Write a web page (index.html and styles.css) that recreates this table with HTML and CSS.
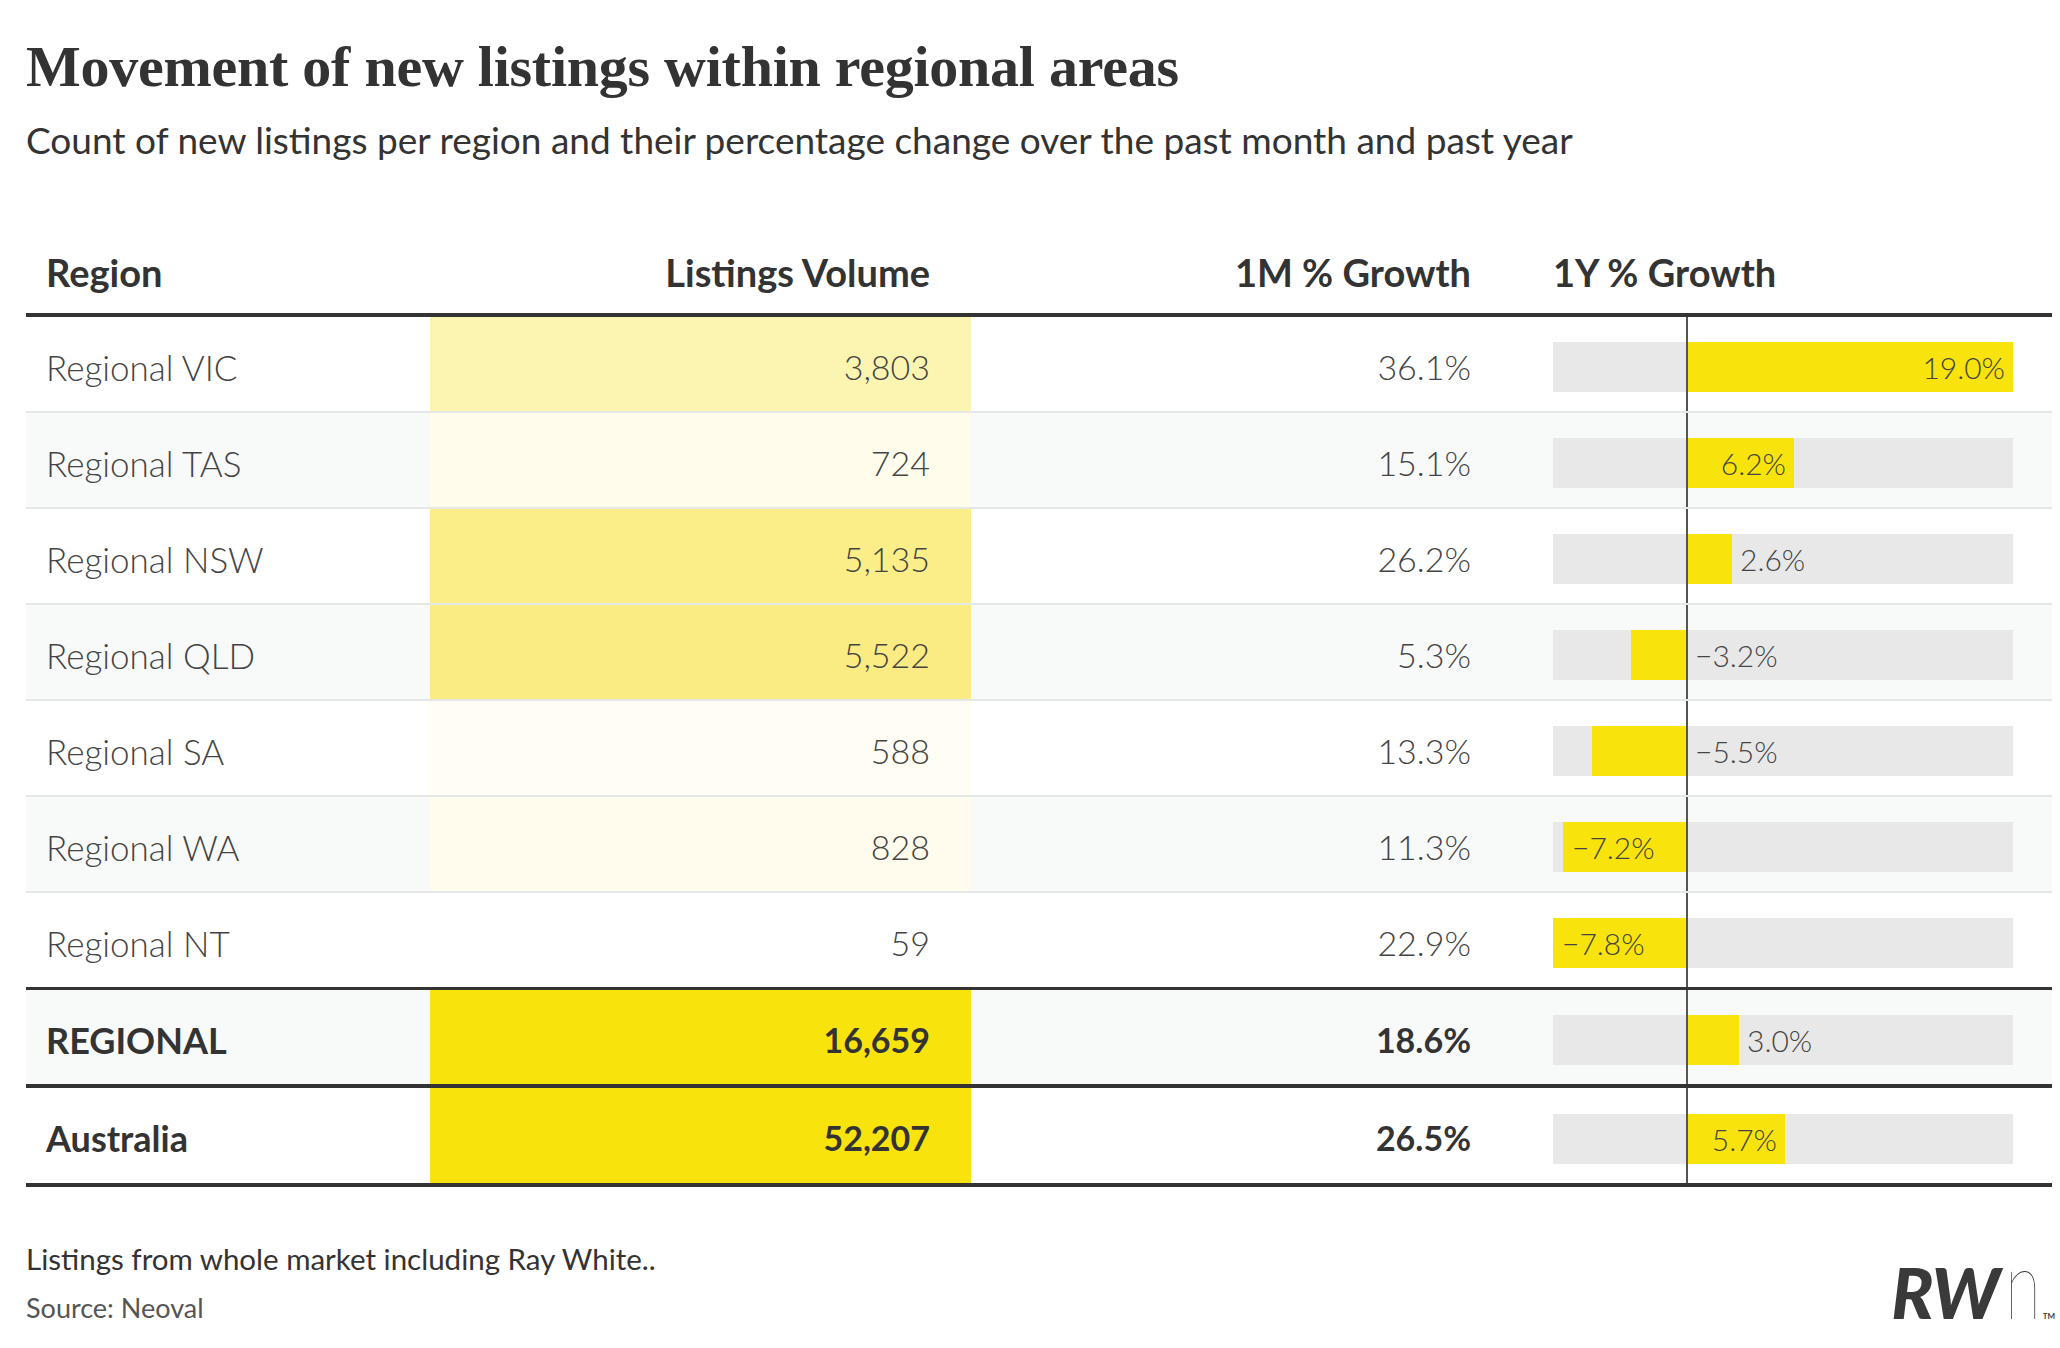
FILE: index.html
```html
<!DOCTYPE html>
<html lang="en">
<head>
<meta charset="utf-8">
<title>Movement of new listings within regional areas</title>
<link rel="stylesheet" href="styles.css">
</head>
<body>
<div class="page">
  <h1 class="title">Movement of new listings within regional areas</h1>
  <p class="subtitle">Count of new listings per region and their percentage change over the past month and past year</p>

  <div class="table">
    <div class="row head">
      <div class="cell c-region">Region</div>
      <div class="cell c-num">Listings Volume</div>
      <div class="cell c-num">1M % Growth</div>
      <div class="cell c-head-growth">1Y % Growth</div>
    </div>

    <div class="row">
      <div class="cell c-region">Regional VIC</div>
      <div class="cell c-num heat" style="background:#fcf5b1">3,803</div>
      <div class="cell c-num">36.1%</div>
      <div class="cell growth">
        <div class="neg"><div class="track"></div></div>
        <div class="axis"></div>
        <div class="pos"><div class="track"><div class="bar in" style="width:325px"><span class="lbl">19.0%</span></div></div></div>
      </div>
    </div>

    <div class="row alt">
      <div class="cell c-region">Regional TAS</div>
      <div class="cell c-num heat" style="background:#fffcec">724</div>
      <div class="cell c-num">15.1%</div>
      <div class="cell growth">
        <div class="neg"><div class="track"></div></div>
        <div class="axis"></div>
        <div class="pos"><div class="track"><div class="bar in" style="width:106px"><span class="lbl">6.2%</span></div></div></div>
      </div>
    </div>

    <div class="row">
      <div class="cell c-region">Regional NSW</div>
      <div class="cell c-num heat" style="background:#fbee89">5,135</div>
      <div class="cell c-num">26.2%</div>
      <div class="cell growth">
        <div class="neg"><div class="track"></div></div>
        <div class="axis"></div>
        <div class="pos"><div class="track"><div class="bar" style="width:44px"></div><span class="lbl out">2.6%</span></div></div>
      </div>
    </div>

    <div class="row alt">
      <div class="cell c-region">Regional QLD</div>
      <div class="cell c-num heat" style="background:#faec83">5,522</div>
      <div class="cell c-num">5.3%</div>
      <div class="cell growth">
        <div class="neg"><div class="track"><div class="bar" style="width:55px"></div></div></div>
        <div class="axis"></div>
        <div class="pos"><div class="track"><span class="lbl out-neg">−3.2%</span></div></div>
      </div>
    </div>

    <div class="row">
      <div class="cell c-region">Regional SA</div>
      <div class="cell c-num heat" style="background:#fffdf4">588</div>
      <div class="cell c-num">13.3%</div>
      <div class="cell growth">
        <div class="neg"><div class="track"><div class="bar" style="width:94px"></div></div></div>
        <div class="axis"></div>
        <div class="pos"><div class="track"><span class="lbl out-neg">−5.5%</span></div></div>
      </div>
    </div>

    <div class="row alt">
      <div class="cell c-region">Regional WA</div>
      <div class="cell c-num heat" style="background:#fffcee">828</div>
      <div class="cell c-num">11.3%</div>
      <div class="cell growth">
        <div class="neg"><div class="track"><div class="bar in-neg" style="width:123px"><span class="lbl">−7.2%</span></div></div></div>
        <div class="axis"></div>
        <div class="pos"><div class="track"></div></div>
      </div>
    </div>

    <div class="row last-region">
      <div class="cell c-region">Regional NT</div>
      <div class="cell c-num heat" style="background:#ffffff">59</div>
      <div class="cell c-num">22.9%</div>
      <div class="cell growth">
        <div class="neg"><div class="track"><div class="bar in-neg" style="width:133px"><span class="lbl">−7.8%</span></div></div></div>
        <div class="axis"></div>
        <div class="pos"><div class="track"></div></div>
      </div>
    </div>

    <div class="row total alt">
      <div class="cell c-region">REGIONAL</div>
      <div class="cell c-num heat full">16,659</div>
      <div class="cell c-num">18.6%</div>
      <div class="cell growth">
        <div class="neg"><div class="track"></div></div>
        <div class="axis"></div>
        <div class="pos"><div class="track"><div class="bar" style="width:51px"></div><span class="lbl out">3.0%</span></div></div>
      </div>
    </div>

    <div class="row total final">
      <div class="cell c-region">Australia</div>
      <div class="cell c-num heat full">52,207</div>
      <div class="cell c-num">26.5%</div>
      <div class="cell growth">
        <div class="neg"><div class="track"></div></div>
        <div class="axis"></div>
        <div class="pos"><div class="track"><div class="bar in" style="width:97px"><span class="lbl">5.7%</span></div></div></div>
      </div>
    </div>
  </div>

  <div class="footer">
    <div class="notes">
      <p class="note">Listings from whole market including Ray White..</p>
      <p class="source">Source: Neoval</p>
    </div>
    <div class="logo"><span class="rw">RW</span><span class="n">n</span><span class="tm">TM</span></div>
  </div>
</div>
</body>
</html>
```

FILE: styles.css
```css
html, body {
  margin: 0;
  padding: 0;
  background: #ffffff;
}

body {
  font-family: "Lato", "Open Sans", sans-serif;
  color: #333333;
}

.page {
  padding: 0 8px 0 26px;
}

.title {
  margin: 32px 0 0 0;
  font-family: "Liberation Serif", "DejaVu Serif", serif;
  font-weight: 700;
  font-size: 58px;
  line-height: 70px;
  letter-spacing: -0.25px;
  color: #333333;
}

.subtitle {
  margin: 18px 0 0 0;
  font-size: 37px;
  line-height: 40px;
  font-weight: 400;
  color: #333333;
}

.table {
  margin-top: 92px;
}

.row {
  display: grid;
  grid-template-columns: 404px 541px 541px 540px;
  height: 94px;
  border-bottom: 2px solid #e6e7e7;
  background: #ffffff;
}

.row.alt {
  background: #f8f9f9;
}

.row.head {
  height: auto;
  padding-bottom: 21px;
  border-bottom: 4px solid #333333;
}

.row.last-region {
  border-bottom: 3px solid #333333;
}

.row.total {
  border-bottom: 4px solid #333333;
}

.row.final {
  height: 95px;
}

.cell {
  display: flex;
  align-items: center;
  font-size: 34px;
  line-height: 40px;
  font-weight: 300;
  color: #444444;
  padding-top: 5px;
  box-sizing: border-box;
}

.row.head .cell {
  padding-top: 0;
  font-size: 38px;
  font-weight: 700;
  color: #333333;
}

.row.total .cell {
  font-weight: 700;
  color: #333333;
}

.c-region {
  padding-left: 20px;
  font-size: 35px;
}

.row.total .c-region {
  font-size: 36px;
}

.c-num {
  justify-content: flex-end;
  padding-right: 41px;
}

.c-head-growth {
  padding-left: 41px;
}

.heat.full {
  background: #f9e30d;
}

.growth {
  padding-left: 41px;
  padding-top: 0;
  align-items: stretch;
}

.neg,
.pos {
  display: flex;
  align-items: center;
  padding-top: 6px;
}

.neg {
  width: 133px;
}

.pos {
  width: 325px;
}

.axis {
  width: 2px;
  background: #555555;
}

.track {
  width: 100%;
  height: 50px;
  background: #e8e8e8;
  display: flex;
  align-items: center;
}

.neg .track {
  justify-content: flex-end;
}

.pos .track {
  justify-content: flex-start;
}

.bar {
  height: 100%;
  background: #f9e30d;
  display: flex;
  align-items: center;
  box-sizing: border-box;
  flex: none;
}

.bar.in {
  justify-content: flex-end;
  padding-right: 8px;
}

.bar.in-neg {
  justify-content: flex-start;
  padding-left: 9px;
}

.lbl {
  font-size: 30px;
  line-height: 30px;
  font-weight: 300;
  color: #444444;
  white-space: nowrap;
}

.lbl.out {
  margin-left: 8px;
}

.lbl.out-neg {
  margin-left: 7px;
}

.footer {
  display: flex;
  justify-content: space-between;
  align-items: flex-start;
  margin-top: 55px;
}

.note,
.source {
  margin: 0;
  line-height: 34px;
  font-weight: 400;
}

.note {
  font-size: 29.5px;
  color: #333333;
}

.source {
  font-size: 27px;
  margin-top: 15px;
  color: #555555;
}

.logo {
  align-self: flex-end;
  display: flex;
  align-items: baseline;
  color: #3a3a3a;
  line-height: 52px;
  margin-right: -3px;
  margin-bottom: -17px;
}

.rw {
  font-size: 70px;
  font-weight: 900;
  font-style: italic;
  letter-spacing: -1px;
}

.n {
  font-size: 97px;
  font-weight: 200;
  display: inline-block;
  transform: scaleX(0.68);
  transform-origin: left bottom;
  margin-left: 6px;
  margin-right: -15px;
}

.tm {
  font-size: 8px;
  font-weight: 700;
  letter-spacing: 0;
}
```
